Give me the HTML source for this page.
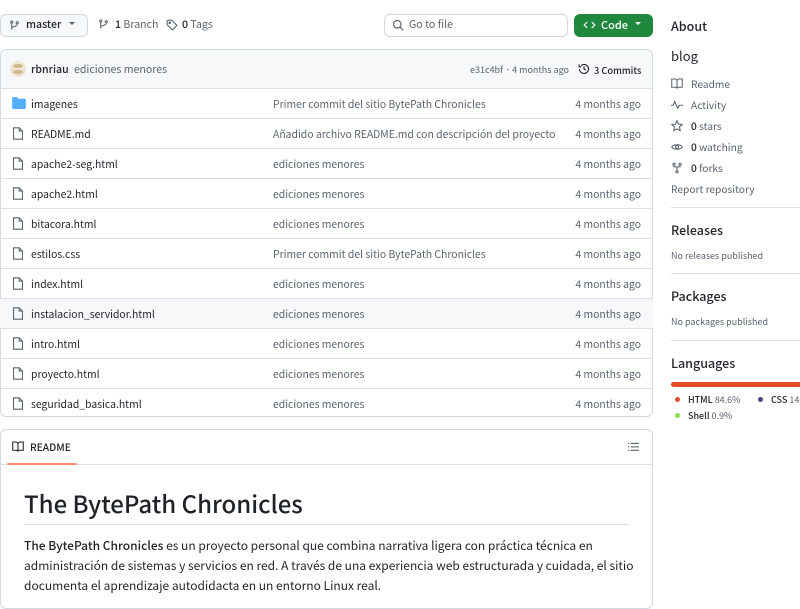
<!DOCTYPE html>
<html><head><meta charset="utf-8"><style>
*{box-sizing:border-box;margin:0;padding:0}
body{width:800px;height:600px;overflow:hidden;background:#fff;font-family:"Noto Sans CJK JP","Liberation Sans",sans-serif;color:#1f2328;font-size:11px;position:relative}
.a{position:absolute;white-space:nowrap}
.btn{border:1px solid #d1d9e0;border-radius:6px;background:#f6f8fa}
.box{border:1px solid #d1d9e0;border-radius:6px}
.row{position:absolute;left:0;width:653px;height:30px;border-top:1px solid #d8dee4;white-space:nowrap}
.row .n{position:absolute;left:31px;top:7px;font-size:10.4px;color:#1f2328}
.row .m{position:absolute;left:273px;top:7px;font-size:10.4px;color:#59636e}
.row .t{position:absolute;right:12px;top:7px;font-size:10.4px;color:#59636e}
.row svg{position:absolute;left:12px;top:8px}
.g{color:#59636e}
.side{position:absolute;left:671px;font-size:10.2px;color:#59636e;white-space:nowrap}
.side svg{position:absolute;left:0;top:2px}
.side span{position:absolute;left:20px;top:0;white-space:nowrap}
h3{position:absolute;left:671px;font-size:12.5px;font-weight:500;color:#1f2328}
.hr{position:absolute;left:671px;width:140px;height:1px;background:#d8dee4}
b{font-weight:500}
</style></head><body>
<div class="a btn" style="left:0;top:14px;width:88px;height:23px"></div>
<svg class="a" style="left:9px;top:20px" width="11" height="11" viewBox="0 0 16 16" fill="none" stroke="#59636e" stroke-width="1.5"><circle cx="4" cy="3" r="1.6"/><circle cx="12" cy="4" r="1.6"/><path d="M4 5v9M12 6c0 4-8 3-8 6"/></svg>
<div class="a" style="left:26px;top:17px;font-size:10.6px;font-weight:500">master</div>
<div class="a" style="left:69px;top:22px;border:3px solid transparent;border-top:3.5px solid #59636e"></div>
<svg class="a" style="left:98px;top:19px" width="11" height="11" viewBox="0 0 16 16" fill="none" stroke="#59636e" stroke-width="1.5"><circle cx="4" cy="3" r="1.6"/><circle cx="12" cy="4" r="1.6"/><path d="M4 5v9M12 6c0 4-8 3-8 6"/></svg>
<div class="a" style="left:115px;top:17px;font-size:10.6px"><b>1</b> <span class="g">Branch</span></div>
<svg class="a" style="left:166px;top:19px" width="12" height="12" viewBox="0 0 16 16" fill="none" stroke="#59636e" stroke-width="1.5"><path d="M1.5 2.5v5l7 7 6-6-7-7h-5z"/><circle cx="5" cy="5" r="1"/></svg>
<div class="a" style="left:182px;top:17px;font-size:10.6px"><b>0</b> <span class="g">Tags</span></div>
<div class="a" style="left:384px;top:14px;width:184px;height:23px;border:1px solid #d1d9e0;border-radius:6px"></div>
<svg class="a" style="left:392px;top:19px" width="12" height="12" viewBox="0 0 16 16" fill="none" stroke="#59636e" stroke-width="1.6"><circle cx="7" cy="7" r="5"/><path d="M11 11l4 4"/></svg>
<div class="a" style="left:409px;top:17px;color:#59636e;font-size:10.6px">Go to file</div>
<div class="a" style="left:574px;top:14px;width:79px;height:23px;background:#1f883d;border-radius:6px"></div>
<svg class="a" style="left:583px;top:19px" width="13" height="12" viewBox="0 0 16 16" fill="none" stroke="#fff" stroke-width="1.6"><path d="M5 4L1 8l4 4M11 4l4 4-4 4"/></svg>
<div class="a" style="left:601px;top:17px;color:#fff;font-weight:500">Code</div>
<div class="a" style="left:635px;top:22px;border:3px solid transparent;border-top:3.5px solid #fff"></div>

<div class="a box" style="left:0;top:49px;width:653px;height:368px;overflow:hidden">
<div style="position:absolute;left:0;top:0;width:653px;height:39px;background:#f6f8fa"></div>
<svg style="position:absolute;left:9px;top:11px" width="16" height="16"><circle cx="8" cy="8" r="8" fill="#efe6d2"/><ellipse cx="8" cy="5" rx="5" ry="2" fill="#cdb98b"/><ellipse cx="8" cy="11" rx="5" ry="2" fill="#cdb98b"/></svg>
<div class="a" style="left:30px;top:12px;font-weight:500;font-size:10.6px">rbnriau</div>
<div class="a g" style="left:73px;top:12px;font-size:10.6px">ediciones menores</div>
<div class="a g" style="left:469px;top:13px;font-size:9px">e31c4bf · 4 months ago</div>
<svg class="a" style="left:577px;top:13px" width="12" height="12" viewBox="0 0 16 16" fill="none" stroke="#1f2328" stroke-width="1.5"><path d="M2 8a6 6 0 1 0 2-4.5"/><path d="M1.5 2v3h3M8 4.5V8l2.5 1.5"/></svg>
<div class="a" style="left:593px;top:13px;font-size:9.3px;font-weight:500">3 Commits</div>
</div>

<div id="rows"></div>
<div class="a" style="left:0;top:429px;width:653px;height:180px;border:1px solid #d1d9e0;border-radius:6px"></div>
<div class="a" style="left:1px;top:464px;width:651px;height:1px;background:#d8dee4"></div>
<div class="a" style="left:7px;top:463px;width:70px;height:2px;background:#fd8c73;border-radius:1px"></div>
<svg class="a" style="left:12px;top:441px" width="12" height="11" viewBox="0 0 16 14" fill="none" stroke="#1f2328" stroke-width="1.4"><path d="M1 1h5l2 2 2-2h5v11h-5l-2 1-2-1H1z M8 3v10"/></svg>
<div class="a" style="left:30px;top:439px;font-size:10.2px;font-weight:500">README</div>
<svg class="a" style="left:628px;top:442px" width="11" height="10" viewBox="0 0 16 14" fill="#59636e"><rect x="0" y="1" width="2" height="1.6"/><rect x="4" y="1" width="12" height="1.6"/><rect x="0" y="6" width="2" height="1.6"/><rect x="4" y="6" width="12" height="1.6"/><rect x="0" y="11" width="2" height="1.6"/><rect x="4" y="11" width="12" height="1.6"/></svg>
<div class="a" style="left:24px;top:485px;font-size:24px;font-weight:500">The BytePath Chronicles</div>
<div class="a" style="left:24px;top:524px;width:605px;height:1px;background:#d8dee4"></div>
<div class="a" style="left:24px;top:536px;font-size:12px;line-height:20px;color:#1f2328"><b>The BytePath Chronicles</b> es un proyecto personal que combina narrativa ligera con práctica técnica en<br>administración de sistemas y servicios en red. A través de una experiencia web estructurada y cuidada, el sitio<br>documenta el aprendizaje autodidacta en un entorno Linux real.</div>

<h3 style="top:16px">About</h3>
<div class="a" style="left:671px;top:46px;font-size:13px">blog</div>
<div class="side" style="top:76px"><svg width="12" height="11" viewBox="0 0 16 14" fill="none" stroke="#59636e" stroke-width="1.4"><path d="M1 1h5l2 2 2-2h5v11h-5l-2 1-2-1H1z M8 3v10"/></svg><span>Readme</span></div>
<div class="side" style="top:97px"><svg width="12" height="11" viewBox="0 0 16 14" fill="none" stroke="#59636e" stroke-width="1.4"><path d="M0 8h3l2-5 4 9 2-4h5"/></svg><span>Activity</span></div>
<div class="side" style="top:118px"><svg width="12" height="12" viewBox="0 0 16 16" fill="none" stroke="#59636e" stroke-width="1.4"><path d="M8 1l2 4.5 5 .5-3.7 3.3 1 5L8 11.8 3.7 14.3l1-5L1 6l5-.5z"/></svg><span><b style="color:#1f2328">0</b> stars</span></div>
<div class="side" style="top:139px"><svg width="12" height="12" viewBox="0 0 16 16" fill="none" stroke="#59636e" stroke-width="1.4"><path d="M1 8c2-4 12-4 14 0-2 4-12 4-14 0z"/><circle cx="8" cy="8" r="2"/></svg><span><b style="color:#1f2328">0</b> watching</span></div>
<div class="side" style="top:160px"><svg width="12" height="12" viewBox="0 0 16 16" fill="none" stroke="#59636e" stroke-width="1.4"><circle cx="4" cy="3" r="1.5"/><circle cx="12" cy="3" r="1.5"/><circle cx="8" cy="13" r="1.5"/><path d="M4 5v1.5h8V5M8 6.5v5"/></svg><span><b style="color:#1f2328">0</b> forks</span></div>
<div class="side" style="top:181px">Report repository</div>
<div class="hr" style="top:207px"></div>
<h3 style="top:220px">Releases</h3>
<div class="side" style="top:249px;font-size:9px">No releases published</div>
<div class="hr" style="top:273px"></div>
<h3 style="top:286px">Packages</h3>
<div class="side" style="top:315px;font-size:9px">No packages published</div>
<div class="hr" style="top:340px"></div>
<h3 style="top:353px">Languages</h3>
<div class="a" style="left:671px;top:382px;width:140px;height:5px;background:#e34c26;border-radius:3px"></div>
<div class="a" style="left:675px;top:397px;width:5px;height:5px;border-radius:50%;background:#e34c26"></div>
<div class="a" style="left:688px;top:393px;font-size:9px;font-weight:500">HTML <span style="font-weight:400;color:#59636e">84.6%</span></div>
<div class="a" style="left:758px;top:397px;width:5px;height:5px;border-radius:50%;background:#563d7c"></div>
<div class="a" style="left:771px;top:393px;font-size:9px;font-weight:500">CSS <span style="font-weight:400;color:#59636e">14.5%</span></div>
<div class="a" style="left:675px;top:413px;width:5px;height:5px;border-radius:50%;background:#89e051"></div>
<div class="a" style="left:688px;top:409px;font-size:9px;font-weight:500">Shell <span style="font-weight:400;color:#59636e">0.9%</span></div>

<script>
var d=[["imagenes","Primer commit del sitio BytePath Chronicles",1],["README.md","Añadido archivo README.md con descripción del proyecto"],["apache2-seg.html","ediciones menores"],["apache2.html","ediciones menores"],["bitacora.html","ediciones menores"],["estilos.css","Primer commit del sitio BytePath Chronicles"],["index.html","ediciones menores"],["instalacion_servidor.html","ediciones menores",0,1],["intro.html","ediciones menores"],["proyecto.html","ediciones menores"],["seguridad_basica.html","ediciones menores"]];
var h="";d.forEach(function(r,i){var ic=r[2]?'<svg width="14" height="12" viewBox="0 0 16 14"><path d="M0 1.5C0 .7.7 0 1.5 0h4l1.5 2h7.5c.8 0 1.5.7 1.5 1.5v9c0 .8-.7 1.5-1.5 1.5h-13C.7 14 0 13.3 0 12.5z" fill="#54aeff"/></svg>':'<svg width="12" height="13" viewBox="0 0 14 16" fill="none" stroke="#59636e" stroke-width="1.3"><path d="M1.5 1h7l4 4v10h-11z M8.5 1v4h4"/></svg>';
h+='<div class="row" style="top:'+(88+i*30)+'px'+(r[3]?';background:#f6f8fa':'')+'">'+ic+'<div class="n">'+r[0]+'</div><div class="m">'+r[1]+'</div><div class="t">4 months ago</div></div>';});
document.getElementById("rows").innerHTML=h;
</script>
</body></html>
